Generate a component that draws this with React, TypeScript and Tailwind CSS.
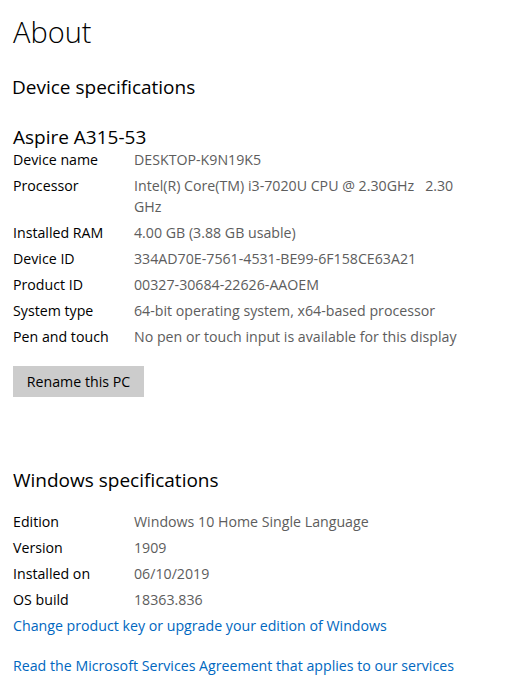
const LABEL = "w-[121px] shrink-0 text-black";
const VALUE = "text-[#5d5d5d]";

const deviceSpecs: [string, string][] = [
  ["Device name", "DESKTOP-K9N19K5"],
  ["Processor", "Intel(R) Core(TM) i3-7020U CPU @ 2.30GHz   2.30\nGHz"],
  ["Installed RAM", "4.00 GB (3.88 GB usable)"],
  ["Device ID", "334AD70E-7561-4531-BE99-6F158CE63A21"],
  ["Product ID", "00327-30684-22626-AAOEM"],
  ["System type", "64-bit operating system, x64-based processor"],
  ["Pen and touch", "No pen or touch input is available for this display"],
];

const windowsSpecs: [string, string][] = [
  ["Edition", "Windows 10 Home Single Language"],
  ["Version", "1909"],
  ["Installed on", "06/10/2019"],
  ["OS build", "18363.836"],
];

function SpecRows({ rows }: { rows: [string, string][] }) {
  return (
    <div className="flex flex-col gap-[5px] text-[14.2px] leading-[21px]">
      {rows.map(([label, value]) => (
        <div key={label} className="flex">
          <div className={LABEL}>{label}</div>
          <div className={`${VALUE} whitespace-pre-wrap`}>{value}</div>
        </div>
      ))}
    </div>
  );
}

export default function App() {
  return (
    <div className="w-[522px] h-[688px] bg-white pl-[13px] pt-[12px] overflow-hidden font-['Open_Sans',sans-serif] text-black">
      <h1 className="text-[29px] font-light leading-[40px]">About</h1>

      <h2 className="mt-[21px] -ml-px text-[19px] leading-[28px]">Device specifications</h2>
      <div className="mt-[24px] text-[19px] leading-[24px]">Aspire A315-53</div>
      <SpecRows rows={deviceSpecs} />

      <button className="mt-[19px] w-[131px] h-[31px] bg-[#cccccc] text-[14.2px] text-black">
        Rename this PC
      </button>

      <h2 className="mt-[69px] text-[19px] leading-[28px]">Windows specifications</h2>
      <div className="mt-[17px]">
        <SpecRows rows={windowsSpecs} />
      </div>

      <div className="mt-[5px] text-[14.2px] leading-[21px] text-[#0067c0]">
        Change product key or upgrade your edition of Windows
      </div>
      <div className="mt-[19px] text-[14.2px] leading-[21px] text-[#0067c0]">
        Read the Microsoft Services Agreement that applies to our services
      </div>
    </div>
  );
}
